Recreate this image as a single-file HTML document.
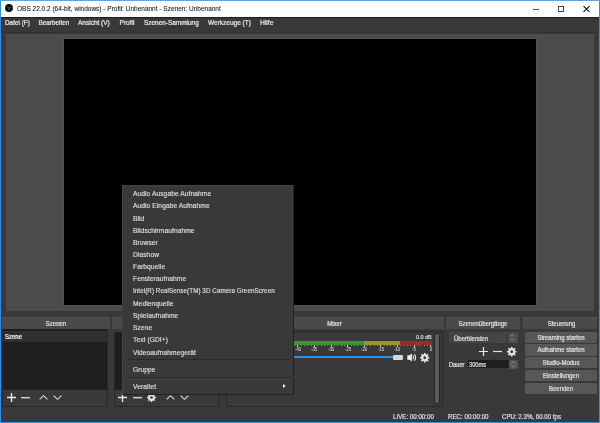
<!DOCTYPE html>
<html><head><meta charset="utf-8">
<style>
*{margin:0;padding:0;box-sizing:border-box}
html,body{width:600px;height:423px;overflow:hidden;background:#3a393a;font-family:"Liberation Sans",sans-serif;color:#e1e0e1}
.a{position:absolute}
.t{position:absolute;white-space:pre;line-height:1;-webkit-text-stroke:0.15px currentColor}
.m{position:absolute;white-space:pre;line-height:1;left:133px;font-size:6.65px;letter-spacing:0.08px;-webkit-text-stroke:0.12px #e1e0e1}
.hd{position:absolute;top:317px;height:12px;background:#4b4a4b;border-top:1px solid #555455}
.ht{position:absolute;top:321.2px;text-align:center;white-space:pre;line-height:1;font-size:6.5px;transform:scaleX(0.92);-webkit-text-stroke:0.22px #e1e0e1}
.btn{position:absolute;left:525px;width:72px;height:11.3px;background:#585758;border-radius:1.5px}
.bt{position:absolute;left:525px;width:72px;text-align:center;white-space:pre;line-height:1;font-size:6.5px;transform:scaleX(0.92);-webkit-text-stroke:0.22px #e1e0e1}
svg{position:absolute;overflow:visible}
.t,.m,.ht,.bt{filter:grayscale(1)}
</style></head><body>
<!-- window border -->
<div class="a" style="left:0;top:0;width:600px;height:423px;border:1px solid #3a8ed9;border-top-color:#60a4e3"></div>
<!-- title bar -->
<div class="a" style="left:1px;top:1px;width:598px;height:16px;background:#fff"></div>
<svg style="left:5.2px;top:4px" width="8" height="8" viewBox="0 0 8 8">
<circle cx="4" cy="4" r="3.95" fill="#0a0a0a"/>
<path d="M1.8 2.4L4 4L6.3 3.3M4 4L3.8 6.2" fill="none" stroke="#8a8a8a" stroke-width="0.55"/>
</svg>
<div class="t" style="left:17px;top:6.4px;font-size:6.5px;color:#111;-webkit-text-stroke:0.06px #111">OBS 22.0.2 (64-bit, windows) - Profil: Unbenannt - Szenen: Unbenannt</div>
<div class="a" style="left:533px;top:8.6px;width:6px;height:0.8px;background:#555"></div>
<div class="a" style="left:558px;top:6px;width:6px;height:5.5px;border:1px solid #444"></div>
<svg style="left:583px;top:5.5px" width="7" height="6" viewBox="0 0 7 6"><path d="M0.5 0.2L6.5 5.8M6.5 0.2L0.5 5.8" stroke="#000" stroke-width="1.05"/></svg>
<!-- menu bar -->
<div class="a" style="left:1px;top:17px;width:598px;height:1.3px;background:#1e1e1e"></div>
<div class="t" style="left:5px;top:20.3px;font-size:6.4px;color:#eceaec;-webkit-text-stroke:0.2px #eceaec">Datei (F)</div>
<div class="t" style="left:38.5px;top:20.3px;font-size:6.4px;color:#eceaec;-webkit-text-stroke:0.2px #eceaec">Bearbeiten</div>
<div class="t" style="left:78px;top:20.3px;font-size:6.5px;color:#eceaec;-webkit-text-stroke:0.2px #eceaec">Ansicht (V)</div>
<div class="t" style="left:119.5px;top:20.3px;font-size:6.6px;color:#eceaec;-webkit-text-stroke:0.2px #eceaec">Profil</div>
<div class="t" style="left:144px;top:20.3px;font-size:6.45px;color:#eceaec;-webkit-text-stroke:0.2px #eceaec">Szenen-Sammlung</div>
<div class="t" style="left:208px;top:20.3px;font-size:6.5px;color:#eceaec;-webkit-text-stroke:0.2px #eceaec">Werkzeuge (T)</div>
<div class="t" style="left:260px;top:20.3px;font-size:6.7px;color:#eceaec;-webkit-text-stroke:0.2px #eceaec">Hilfe</div>
<div class="a" style="left:1px;top:32.3px;width:598px;height:1px;background:#333233"></div>
<!-- preview -->
<div class="a" style="left:6px;top:33.5px;width:588px;height:277px;background:#4b4b4b"></div>
<div class="a" style="left:63px;top:38px;width:474px;height:268px;background:#000;border:1px solid #535353"></div>

<!-- dock headers -->
<div class="hd" style="left:2px;width:108px"></div>
<div class="ht" style="left:2px;width:108px">Szenen</div>
<div class="hd" style="left:112px;width:110px"></div>
<div class="ht" style="left:112px;width:110px">Quellen</div>
<div class="hd" style="left:225px;width:218.5px"></div>
<div class="ht" style="left:225px;width:219px">Mixer</div>
<div class="hd" style="left:446px;width:74px"></div>
<div class="ht" style="left:446px;width:74px">Szenenübergänge</div>
<div class="hd" style="left:523px;width:74px"></div>
<div class="ht" style="left:523.5px;width:75px">Steuerung</div>

<!-- scenes -->
<div class="a" style="left:3px;top:329px;width:104px;height:61px;background:#1f1e1f"></div>
<div class="a" style="left:3px;top:331px;width:104px;height:10.5px;background:#302f30"></div>
<div class="t" style="left:4.6px;top:334.4px;font-size:6.6px;color:#fff;transform:scaleX(0.91);transform-origin:0 0;-webkit-text-stroke:0.22px #fff">Szene</div>
<div class="a" style="left:3px;top:390px;width:104px;height:16px;background:#3a393a"></div>
<svg style="left:6.5px;top:393px" width="9" height="9" viewBox="0 0 9 9"><path d="M4.5 0V9M0 4.5H9" stroke="#e8e8e8" stroke-width="1.4"/></svg>
<svg style="left:21px;top:393.3px" width="9" height="9" viewBox="0 0 9 9"><path d="M0 4.7H9" stroke="#e0e0e0" stroke-width="1.3"/></svg>
<svg style="left:39px;top:395.3px" width="9" height="5" viewBox="0 0 9 5"><path d="M0.6 4.4L4.5 0.7L8.4 4.4" fill="none" stroke="#dcdcdc" stroke-width="1.1"/></svg>
<svg style="left:53px;top:395px" width="9" height="5" viewBox="0 0 9 5"><path d="M0.6 0.6L4.5 4.3L8.4 0.6" fill="none" stroke="#dcdcdc" stroke-width="1.1"/></svg>

<div class="a" style="left:2px;top:329.5px;width:106px;height:77px;border:1px solid #2a292a;border-top:0"></div>
<!-- sources -->
<div class="a" style="left:114.5px;top:331.5px;width:104px;height:58.5px;background:#1f1e1f"></div>
<div class="a" style="left:114.5px;top:390px;width:104px;height:16px;background:#3a393a"></div>
<svg style="left:118px;top:393px" width="9" height="9" viewBox="0 0 9 9"><path d="M4.5 0V9M0 4.5H9" stroke="#e8e8e8" stroke-width="1.4"/></svg>
<svg style="left:132.5px;top:393.3px" width="9" height="9" viewBox="0 0 9 9"><path d="M0 4.7H9" stroke="#e0e0e0" stroke-width="1.3"/></svg>
<svg style="left:146.8px;top:393.3px" width="9" height="9" viewBox="-5 -5 10 10"><path d="M3.58 -0.92L4.93 -0.86L4.93 0.86L3.58 0.92L3.18 1.88L4.09 2.88L2.88 4.09L1.88 3.18L0.92 3.58L0.86 4.93L-0.86 4.93L-0.92 3.58L-1.88 3.18L-2.88 4.09L-4.09 2.88L-3.18 1.88L-3.58 0.92L-4.93 0.86L-4.93 -0.86L-3.58 -0.92L-3.18 -1.88L-4.09 -2.88L-2.88 -4.09L-1.88 -3.18L-0.92 -3.58L-0.86 -4.93L0.86 -4.93L0.92 -3.58L1.88 -3.18L2.88 -4.09L4.09 -2.88L3.18 -1.88Z" fill="#e8e8e8"/><circle r="1.5" fill="#3a393a"/></svg>
<svg style="left:165.5px;top:395.3px" width="9" height="5" viewBox="0 0 9 5"><path d="M0.6 4.4L4.5 0.7L8.4 4.4" fill="none" stroke="#dcdcdc" stroke-width="1.1"/></svg>
<svg style="left:179.5px;top:395px" width="9" height="5" viewBox="0 0 9 5"><path d="M0.6 0.6L4.5 4.3L8.4 0.6" fill="none" stroke="#dcdcdc" stroke-width="1.1"/></svg>

<div class="a" style="left:113.5px;top:330.5px;width:106px;height:76.5px;border:1px solid #2a292a;border-top:0"></div>
<!-- mixer -->
<div class="a" style="left:225.5px;top:330.5px;width:217.5px;height:76.5px;border:1px solid #2a292a"></div>
<div class="t" style="left:416px;top:335.2px;font-size:5.4px">0.0 dB</div>
<div class="a" style="left:226px;top:340.8px;width:138px;height:4px;background:#3a962c"></div>
<div class="a" style="left:364px;top:340.8px;width:36.3px;height:4px;background:#9a962c"></div>
<div class="a" style="left:400.3px;top:340.8px;width:31.4px;height:4px;background:#9c2c2c"></div>
<div class="a" style="left:294.13px;top:344.8px;width:0.7px;height:1px;background:#8a898a"></div>
<div class="a" style="left:297.35px;top:344.8px;width:0.9px;height:2px;background:#d0d0d0"></div>
<div class="t" style="left:287.80px;width:20px;text-align:center;top:347.2px;font-size:5px;transform:scaleX(0.8);color:#cfcfcf;-webkit-text-stroke:0.1px #cfcfcf">-40</div>
<div class="a" style="left:300.77px;top:344.8px;width:0.7px;height:1px;background:#8a898a"></div>
<div class="a" style="left:304.09px;top:344.8px;width:0.7px;height:1px;background:#8a898a"></div>
<div class="a" style="left:307.41px;top:344.8px;width:0.7px;height:1px;background:#8a898a"></div>
<div class="a" style="left:310.73px;top:344.8px;width:0.7px;height:1px;background:#8a898a"></div>
<div class="a" style="left:313.95px;top:344.8px;width:0.9px;height:2px;background:#d0d0d0"></div>
<div class="t" style="left:304.40px;width:20px;text-align:center;top:347.2px;font-size:5px;transform:scaleX(0.8);color:#cfcfcf;-webkit-text-stroke:0.1px #cfcfcf">-35</div>
<div class="a" style="left:317.37px;top:344.8px;width:0.7px;height:1px;background:#8a898a"></div>
<div class="a" style="left:320.69px;top:344.8px;width:0.7px;height:1px;background:#8a898a"></div>
<div class="a" style="left:324.01px;top:344.8px;width:0.7px;height:1px;background:#8a898a"></div>
<div class="a" style="left:327.33px;top:344.8px;width:0.7px;height:1px;background:#8a898a"></div>
<div class="a" style="left:330.55px;top:344.8px;width:0.9px;height:2px;background:#d0d0d0"></div>
<div class="t" style="left:321.00px;width:20px;text-align:center;top:347.2px;font-size:5px;transform:scaleX(0.8);color:#cfcfcf;-webkit-text-stroke:0.1px #cfcfcf">-30</div>
<div class="a" style="left:333.97px;top:344.8px;width:0.7px;height:1px;background:#8a898a"></div>
<div class="a" style="left:337.29px;top:344.8px;width:0.7px;height:1px;background:#8a898a"></div>
<div class="a" style="left:340.61px;top:344.8px;width:0.7px;height:1px;background:#8a898a"></div>
<div class="a" style="left:343.93px;top:344.8px;width:0.7px;height:1px;background:#8a898a"></div>
<div class="a" style="left:347.15px;top:344.8px;width:0.9px;height:2px;background:#d0d0d0"></div>
<div class="t" style="left:337.60px;width:20px;text-align:center;top:347.2px;font-size:5px;transform:scaleX(0.8);color:#cfcfcf;-webkit-text-stroke:0.1px #cfcfcf">-25</div>
<div class="a" style="left:350.57px;top:344.8px;width:0.7px;height:1px;background:#8a898a"></div>
<div class="a" style="left:353.89px;top:344.8px;width:0.7px;height:1px;background:#8a898a"></div>
<div class="a" style="left:357.21px;top:344.8px;width:0.7px;height:1px;background:#8a898a"></div>
<div class="a" style="left:360.53px;top:344.8px;width:0.7px;height:1px;background:#8a898a"></div>
<div class="a" style="left:363.75px;top:344.8px;width:0.9px;height:2px;background:#d0d0d0"></div>
<div class="t" style="left:354.20px;width:20px;text-align:center;top:347.2px;font-size:5px;transform:scaleX(0.8);color:#cfcfcf;-webkit-text-stroke:0.1px #cfcfcf">-20</div>
<div class="a" style="left:367.17px;top:344.8px;width:0.7px;height:1px;background:#8a898a"></div>
<div class="a" style="left:370.49px;top:344.8px;width:0.7px;height:1px;background:#8a898a"></div>
<div class="a" style="left:373.81px;top:344.8px;width:0.7px;height:1px;background:#8a898a"></div>
<div class="a" style="left:377.13px;top:344.8px;width:0.7px;height:1px;background:#8a898a"></div>
<div class="a" style="left:380.35px;top:344.8px;width:0.9px;height:2px;background:#d0d0d0"></div>
<div class="t" style="left:370.80px;width:20px;text-align:center;top:347.2px;font-size:5px;transform:scaleX(0.8);color:#cfcfcf;-webkit-text-stroke:0.1px #cfcfcf">-15</div>
<div class="a" style="left:383.77px;top:344.8px;width:0.7px;height:1px;background:#8a898a"></div>
<div class="a" style="left:387.09px;top:344.8px;width:0.7px;height:1px;background:#8a898a"></div>
<div class="a" style="left:390.41px;top:344.8px;width:0.7px;height:1px;background:#8a898a"></div>
<div class="a" style="left:393.73px;top:344.8px;width:0.7px;height:1px;background:#8a898a"></div>
<div class="a" style="left:396.95px;top:344.8px;width:0.9px;height:2px;background:#d0d0d0"></div>
<div class="t" style="left:387.40px;width:20px;text-align:center;top:347.2px;font-size:5px;transform:scaleX(0.8);color:#cfcfcf;-webkit-text-stroke:0.1px #cfcfcf">-10</div>
<div class="a" style="left:400.37px;top:344.8px;width:0.7px;height:1px;background:#8a898a"></div>
<div class="a" style="left:403.69px;top:344.8px;width:0.7px;height:1px;background:#8a898a"></div>
<div class="a" style="left:407.01px;top:344.8px;width:0.7px;height:1px;background:#8a898a"></div>
<div class="a" style="left:410.33px;top:344.8px;width:0.7px;height:1px;background:#8a898a"></div>
<div class="a" style="left:413.55px;top:344.8px;width:0.9px;height:2px;background:#d0d0d0"></div>
<div class="t" style="left:404.00px;width:20px;text-align:center;top:347.2px;font-size:5px;transform:scaleX(0.8);color:#cfcfcf;-webkit-text-stroke:0.1px #cfcfcf">-5</div>
<div class="a" style="left:416.97px;top:344.8px;width:0.7px;height:1px;background:#8a898a"></div>
<div class="a" style="left:420.29px;top:344.8px;width:0.7px;height:1px;background:#8a898a"></div>
<div class="a" style="left:423.61px;top:344.8px;width:0.7px;height:1px;background:#8a898a"></div>
<div class="a" style="left:426.93px;top:344.8px;width:0.7px;height:1px;background:#8a898a"></div>
<div class="a" style="left:430.15px;top:344.8px;width:0.9px;height:2px;background:#d0d0d0"></div>
<div class="t" style="left:420.60px;width:20px;text-align:center;top:347.2px;font-size:5px;transform:scaleX(0.8);color:#cfcfcf;-webkit-text-stroke:0.1px #cfcfcf">0</div>
<div class="a" style="left:226px;top:356.1px;width:168px;height:2.3px;background:#2a90ea"></div>
<div class="a" style="left:393.3px;top:354.8px;width:10px;height:5px;background:#d8d8d8;border-radius:1px"></div>
<svg style="left:406.5px;top:353px" width="10" height="9" viewBox="0 0 10 9"><path d="M0.3 2.3H2.4L4.9 0.4V8.6L2.4 6.7H0.3Z" fill="#f2f2f2"/><path d="M6 2.6Q7.2 4.5 6 6.4M7.5 1.2Q9.7 4.5 7.5 7.8" fill="none" stroke="#eee" stroke-width="1.1"/></svg>
<svg style="left:420px;top:352.7px" width="9.5" height="9.5" viewBox="-5 -5 10 10"><path d="M3.58 -0.92L4.93 -0.86L4.93 0.86L3.58 0.92L3.18 1.88L4.09 2.88L2.88 4.09L1.88 3.18L0.92 3.58L0.86 4.93L-0.86 4.93L-0.92 3.58L-1.88 3.18L-2.88 4.09L-4.09 2.88L-3.18 1.88L-3.58 0.92L-4.93 0.86L-4.93 -0.86L-3.58 -0.92L-3.18 -1.88L-4.09 -2.88L-2.88 -4.09L-1.88 -3.18L-0.92 -3.58L-0.86 -4.93L0.86 -4.93L0.92 -3.58L1.88 -3.18L2.88 -4.09L4.09 -2.88L3.18 -1.88Z" fill="#e8e8e8"/><circle r="1.5" fill="#3a393a"/></svg>
<div class="a" style="left:434px;top:333.3px;width:5.5px;height:70.7px;background:#5c5b5c;border:0.7px solid #232223;border-radius:2.5px"></div>

<!-- transitions -->
<div class="a" style="left:449px;top:332px;width:69px;height:11px;background:#464546;border-radius:1.5px"></div>
<div class="a" style="left:506.6px;top:332.5px;width:11px;height:10px;background:#504f50;border-left:0.8px solid #333233;border-radius:1.5px"></div>
<svg style="left:510.3px;top:334px" width="4.5" height="7" viewBox="0 0 4.5 7"><path d="M0.4 2.3L2.25 0.7L4.1 2.3M0.4 4.7L2.25 6.3L4.1 4.7" fill="none" stroke="#9a999a" stroke-width="0.85"/></svg>
<div class="t" style="left:453.8px;top:335.5px;font-size:6.5px;transform:scaleX(0.92);transform-origin:0 0;-webkit-text-stroke:0.22px #e1e0e1">Überblenden</div>
<svg style="left:478.5px;top:346.5px" width="9" height="9" viewBox="0 0 9 9"><path d="M4.5 0V9M0 4.5H9" stroke="#e8e8e8" stroke-width="1.2"/></svg>
<svg style="left:492.8px;top:346.5px" width="9" height="9" viewBox="0 0 9 9"><path d="M0 4.5H9" stroke="#e0e0e0" stroke-width="1.2"/></svg>
<svg style="left:507px;top:346.8px" width="9.5" height="9.5" viewBox="-5 -5 10 10"><path d="M3.58 -0.92L4.93 -0.86L4.93 0.86L3.58 0.92L3.18 1.88L4.09 2.88L2.88 4.09L1.88 3.18L0.92 3.58L0.86 4.93L-0.86 4.93L-0.92 3.58L-1.88 3.18L-2.88 4.09L-4.09 2.88L-3.18 1.88L-3.58 0.92L-4.93 0.86L-4.93 -0.86L-3.58 -0.92L-3.18 -1.88L-4.09 -2.88L-2.88 -4.09L-1.88 -3.18L-0.92 -3.58L-0.86 -4.93L0.86 -4.93L0.92 -3.58L1.88 -3.18L2.88 -4.09L4.09 -2.88L3.18 -1.88Z" fill="#e8e8e8"/><circle r="1.5" fill="#3a393a"/></svg>
<div class="t" style="left:448.5px;top:361.5px;font-size:6.4px;transform:scaleX(0.89);transform-origin:0 0;-webkit-text-stroke:0.22px #e1e0e1">Dauer</div>
<div class="a" style="left:467.5px;top:360px;width:41px;height:8.3px;background:#1f1e1f"></div>
<div class="a" style="left:508.7px;top:360px;width:9.3px;height:8.5px;background:#555455;border-radius:1.5px"></div>
<svg style="left:511.2px;top:360.8px" width="4.5" height="7" viewBox="0 0 4.5 7"><path d="M0.4 2.3L2.25 0.8L4.1 2.3M0.4 4.5L2.25 6L4.1 4.5" fill="none" stroke="#9a999a" stroke-width="0.85"/></svg>
<div class="t" style="left:469px;top:361.5px;font-size:6.4px;transform:scaleX(0.89);transform-origin:0 0;-webkit-text-stroke:0.22px #e1e0e1">300ms</div>

<!-- controls -->
<div class="btn" style="top:331.5px"></div><div class="bt" style="top:334.5px">Streaming starten</div>
<div class="btn" style="top:344.4px"></div><div class="bt" style="top:347.4px">Aufnahme starten</div>
<div class="btn" style="top:357.2px"></div><div class="bt" style="top:360.2px">Studio-Modus</div>
<div class="btn" style="top:370.1px"></div><div class="bt" style="top:373.1px">Einstellungen</div>
<div class="btn" style="top:383px"></div><div class="bt" style="top:386px">Beenden</div>

<!-- status bar -->
<div class="t" style="left:393.3px;top:413.7px;font-size:6.5px;transform:scaleX(0.95);transform-origin:0 0;-webkit-text-stroke:0.18px #e1e0e1">LIVE: 00:00:00</div>
<div class="t" style="left:448px;top:413.7px;font-size:6.5px;transform:scaleX(0.95);transform-origin:0 0;-webkit-text-stroke:0.18px #e1e0e1">REC: 00:00:00</div>
<div class="t" style="left:502px;top:413.7px;font-size:6.5px;transform:scaleX(0.944);transform-origin:0 0;-webkit-text-stroke:0.18px #e1e0e1">CPU: 2.3%, 60.00 fps</div>

<!-- popup menu -->
<div class="a" style="left:122px;top:185px;width:172px;height:210px;background:#3a393a;border-top:1px solid #464546;border-left:1px solid #444344;border-right:1px solid #232223;border-bottom:1px solid #232223"></div>
<div class="m" style="top:191.1px">Audio Ausgabe Aufnahme</div>
<div class="m" style="top:203.3px">Audio Eingabe Aufnahme</div>
<div class="m" style="top:215.5px">Bild</div>
<div class="m" style="top:227.5px">Bildschirmaufnahme</div>
<div class="m" style="top:239.7px">Browser</div>
<div class="m" style="top:251.9px">Diashow</div>
<div class="m" style="top:264.1px">Farbquelle</div>
<div class="m" style="top:276.3px">Fensteraufnahme</div>
<div class="m" style="top:288.3px;transform:scaleX(0.94);transform-origin:0 0">Intel(R) RealSense(TM) 3D Camera GreenScreen</div>
<div class="m" style="top:300.7px">Medienquelle</div>
<div class="m" style="top:312.9px">Spielaufnahme</div>
<div class="m" style="top:325.1px">Szene</div>
<div class="m" style="top:337.3px">Text (GDI+)</div>
<div class="m" style="top:349.5px">Videoaufnahmegerät</div>
<div class="a" style="left:126.5px;top:359px;width:164px;height:1px;background:#2a292a"></div>
<div class="m" style="top:367.0px">Gruppe</div>
<div class="a" style="left:126.5px;top:377px;width:164px;height:1px;background:#2a292a"></div>
<div class="m" style="top:384.4px">Veraltet</div>
<svg style="left:282.6px;top:383.8px" width="3" height="4" viewBox="0 0 3 4"><path d="M0 0L2.8 2L0 4Z" fill="#f0f0f0"/></svg>
</body></html>
